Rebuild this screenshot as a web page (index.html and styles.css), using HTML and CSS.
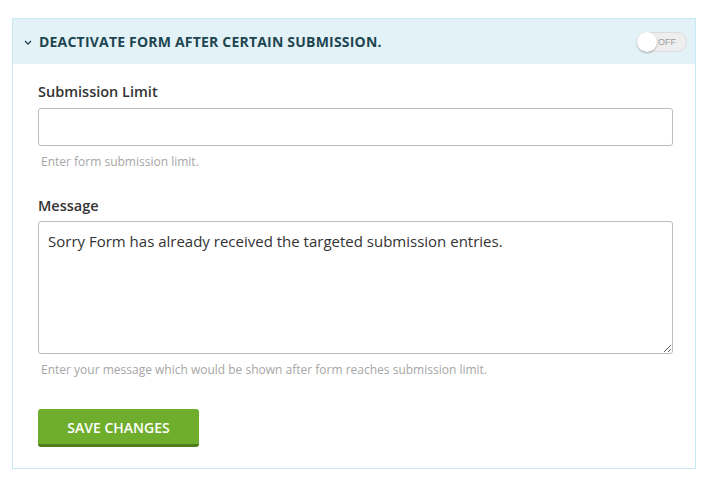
FILE: index.html
```html
<!DOCTYPE html>
<html>
<head>
<meta charset="utf-8">
<link rel="stylesheet" href="styles.css">
</head>
<body>
<div class="panel">
  <div class="panel-head">
    <svg class="chev" width="8" height="5" viewBox="0 0 8 5"><path d="M1 1 L4 4 L7 1" fill="none" stroke="#1d4652" stroke-width="1.3"/></svg>
    <span class="title">DEACTIVATE FORM AFTER CERTAIN SUBMISSION.</span>
    <div class="toggle"><span class="knob"></span><span class="toggle-text">OFF</span></div>
  </div>
  <div class="panel-body">
    <label class="label">Submission Limit</label>
    <input class="field" type="text">
    <p class="help">Enter form submission limit.</p>
    <label class="label label-msg">Message</label>
    <textarea class="area">Sorry Form has already received the targeted submission entries.</textarea>
    <p class="help">Enter your message which would be shown after form reaches submission limit.</p>
    <button class="btn">SAVE CHANGES</button>
  </div>
</div>
</body>
</html>
```
FILE: styles.css
```css
* { box-sizing: border-box; }
html, body { margin: 0; background: #fff; }
body {
  padding: 18px 16px 0 12px;
  font-family: "Open Sans", Lato, sans-serif;
}
.panel {
  width: 684px;
  border: 1px solid #c5e8f2;
  box-shadow: 0 2px 0 #e2f4fa;
  background: #fff;
}
.panel-head {
  height: 45px;
  background: #e3f2f6;
  display: flex;
  align-items: center;
  padding: 0 8px 0 11px;
}
.chev { margin-right: 7px; margin-top: 1px; }
.title {
  font-size: 14px;
  font-weight: 700;
  color: #1d4652;
  letter-spacing: 0.2px;
  flex: 1;
}
.toggle {
  position: relative;
  width: 50px;
  height: 20px;
  border-radius: 10px;
  background: #eeeeee;
  border: 1px solid #dcdcdc;
  display: flex;
  align-items: center;
  justify-content: flex-end;
  padding-right: 10px;
}
.knob {
  position: absolute;
  left: -1px;
  top: -1px;
  width: 20px;
  height: 20px;
  border-radius: 50%;
  background: #fff;
  box-shadow: 0 1px 2px rgba(0,0,0,0.3);
}
.toggle-text {
  font-family: "Liberation Sans", Arial, sans-serif;
  font-size: 9px;
  color: #9a9a9a;
}
.panel-body {
  padding: 18px 22px 21px 25px;
  display: flex;
  flex-direction: column;
  align-items: flex-start;
}
.label {
  display: block;
  font-size: 14.5px;
  line-height: 20px;
  font-weight: 600;
  color: #333;
  margin-bottom: 6px;
}
.label-msg { margin-bottom: 5px; }
.field {
  width: 100%;
  height: 38px;
  border: 1px solid #bdbdbd;
  border-radius: 3px;
  background: #fff;
  margin: 0;
}
.area {
  width: 100%;
  height: 133px;
  border: 1px solid #bdbdbd;
  border-radius: 3px;
  padding: 9px 9px;
  margin: 0;
  font-family: "Open Sans", Lato, sans-serif;
  font-size: 15px;
  line-height: 20px;
  color: #333;
  resize: vertical;
}
.help {
  margin: 8px 0 0 3px;
  font-size: 12px;
  line-height: 16px;
  color: #a6a6a6;
}
.help + .label { margin-top: 26px; }
.btn {
  margin-top: 31px;
  width: 161px;
  height: 38px;
  border: none;
  border-bottom: 3px solid #4d7f1f;
  border-radius: 3px;
  background: #6fae2d;
  color: #fff;
  font-family: "Open Sans", Lato, sans-serif;
  font-size: 14px;
  font-weight: 600;
  padding: 0;
  padding-top: 2px;
}
```
